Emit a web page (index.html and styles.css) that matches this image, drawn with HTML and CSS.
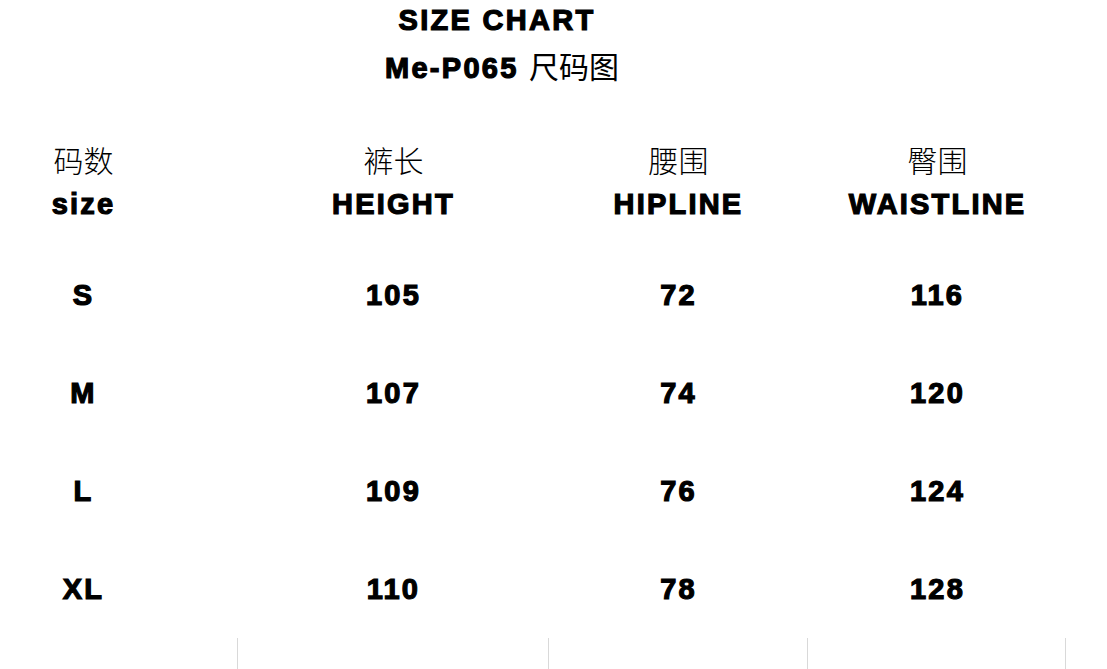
FILE: index.html
```html
<!DOCTYPE html>
<html lang="zh">
<head>
<meta charset="utf-8">
<title>Size Chart</title>
<link rel="stylesheet" href="styles.css">
</head>
<body>
<div class="page">
  <header class="title">
    <div class="title-main">SIZE CHART</div>
    <div class="title-sub">Me-P065 <span class="cn">尺码图</span></div>
  </header>
  <section class="chart">
    <div class="row head">
      <div class="cell first"><div class="cn">码数</div><div class="en">size</div></div>
      <div class="cell"><div class="cn">裤长</div><div class="en">HEIGHT</div></div>
      <div class="cell"><div class="cn">腰围</div><div class="en">HIPLINE</div></div>
      <div class="cell"><div class="cn">臀围</div><div class="en">WAISTLINE</div></div>
    </div>
    <div class="row data">
      <div class="cell first">S</div><div class="cell">105</div><div class="cell">72</div><div class="cell">116</div>
    </div>
    <div class="row data">
      <div class="cell first">M</div><div class="cell">107</div><div class="cell">74</div><div class="cell">120</div>
    </div>
    <div class="row data">
      <div class="cell first">L</div><div class="cell">109</div><div class="cell">76</div><div class="cell">124</div>
    </div>
    <div class="row data">
      <div class="cell first">XL</div><div class="cell">110</div><div class="cell">78</div><div class="cell">128</div>
    </div>
    <div class="row foot">
      <div class="cell first"></div><div class="cell lined"></div><div class="cell lined"></div><div class="cell lined last"></div>
    </div>
  </section>
</div>
</body>
</html>
```
FILE: styles.css
```css
html, body {
  margin: 0;
  padding: 0;
  background: #ffffff;
}
body {
  font-family: "Liberation Sans", Arial, sans-serif;
  color: #000;
  overflow: hidden;
}
.page {
  width: 1107px;
  height: 669px;
}
.title {
  width: 1000px;
  padding-top: 1px;
  text-align: center;
  font-weight: bold;
  font-size: 29px;
  letter-spacing: 2.3px;
  -webkit-text-stroke: 1.2px #000;
}
.title-main {
  height: 38px;
  line-height: 38px;
  padding-right: 6px;
}
.title-sub {
  height: 52px;
  line-height: 52px;
  margin-bottom: 46px;
  padding-left: 4px;
}
.cn {
  font-family: "Noto Sans CJK SC", sans-serif;
  font-weight: 400;
  font-size: 30px;
  letter-spacing: 0;
  -webkit-text-stroke: 0;
}
.row {
  display: grid;
  grid-template-columns: 237px 311px 259px 259px;
}
.cell {
  text-align: center;
  padding-left: 2px;
}
.cell.first {
  padding-left: 1px;
  padding-right: 71px;
}
.head .cn,
.head .en {
  height: 45px;
  line-height: 45px;
}
.head .cn {
  font-weight: 300;
}
.en,
.data .cell {
  font-weight: bold;
  font-size: 29px;
  letter-spacing: 2.2px;
  -webkit-text-stroke: 1.2px #000;
}
.head {
  margin-top: 1px;
  margin-bottom: 19px;
}
.data .cell {
  height: 98px;
  line-height: 98px;
}
.foot .cell {
  height: 31px;
}
.foot .lined {
  border-left: 1px solid #d9d9d9;
}
.foot .last {
  border-right: 1px solid #d9d9d9;
}
```
